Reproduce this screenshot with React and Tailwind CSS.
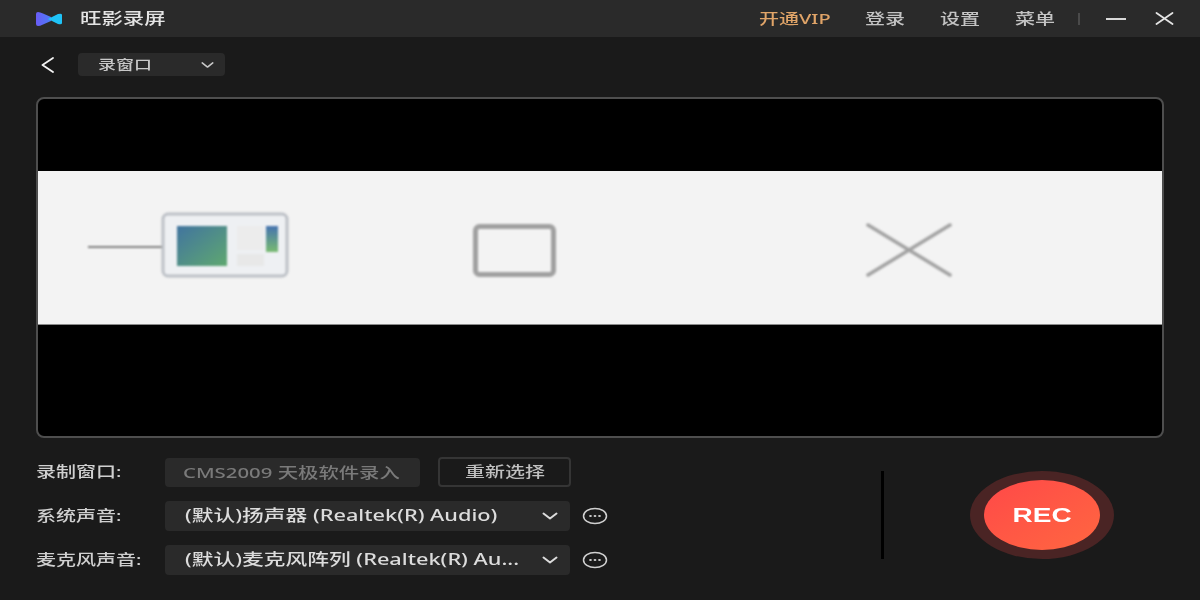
import React from 'react';

// Source picture is stretched sideways, so text is widened with scale-x
const Wide = ({ className = '', children }) => (
  <span className={`block whitespace-nowrap ${className}`}>
    <span className="inline-block origin-left scale-x-[1.38]">{children}</span>
  </span>
);

const Chevron = ({ className = '' }) => (
  <svg className={className} width="16" height="8" viewBox="0 0 16 8" fill="none" stroke="currentColor" strokeWidth="2" strokeLinecap="round" strokeLinejoin="round">
    <path d="M1.5 1.5 L8 6.5 L14.5 1.5" />
  </svg>
);

const MoreIcon = () => (
  <svg width="26" height="18" viewBox="0 0 26 18" fill="none" className="text-[#d0d0d0]">
    <ellipse cx="13" cy="9" rx="11.5" ry="7.5" stroke="currentColor" strokeWidth="1.5" />
    <ellipse cx="8.5" cy="9" rx="1.4" ry="1.1" fill="currentColor" />
    <ellipse cx="13" cy="9" rx="1.4" ry="1.1" fill="currentColor" />
    <ellipse cx="17.5" cy="9" rx="1.4" ry="1.1" fill="currentColor" />
  </svg>
);

const Logo = () => (
  <svg width="28" height="14" viewBox="0 0 28 14">
    <defs>
      <linearGradient id="logoLeft" x1="0" x2="1" y1="0" y2="0">
        <stop offset="0" stopColor="#6a5cf6" />
        <stop offset="1" stopColor="#4c7bf7" />
      </linearGradient>
    </defs>
    <path d="M0 2 Q0 0 2 0 Q4 0 7 1.5 L15 5 L15 9 L7 12.5 Q4 14 2 14 Q0 14 0 12 Z" fill="url(#logoLeft)" />
    <path d="M12 7 L22 2 Q26 1 26 3 L26 11 Q26 13 22 12 Z" fill="#1fc3f7" />
  </svg>
);

const SelectField = ({ text }) => (
  <div className="flex h-[30px] w-[405px] items-center justify-between rounded bg-[#2a2a2a] pl-5 pr-3 text-[#dcdcdc]">
    <Wide className="text-[15.75px] font-medium">{text}</Wide>
    <Chevron />
  </div>
);

const FormLabel = ({ children }) => (
  <Wide className="w-[129px] text-[14.5px] font-medium text-[#d0d0d0]">{children}</Wide>
);

const App = () => {
  return (
    <div className="flex h-[600px] w-[1200px] flex-col overflow-hidden bg-[#1a1a1a] font-['Noto_Sans','Noto_Sans_CJK_SC',sans-serif]">
      {/* Title bar */}
      <div className="flex h-[37px] items-center bg-[#2a2a2a] pl-[36px] pr-[26px]">
        <Logo />
        <Wide className="ml-[16px] text-[15.5px] font-medium text-[#e4e4e4]">旺影录屏</Wide>
        <div className="ml-auto flex items-center text-[14.5px] font-medium text-[#c4c4c4]">
          <Wide className="w-[106px] text-[#e0a468]">开通VIP</Wide>
          <Wide className="w-[75px]">登录</Wide>
          <Wide className="w-[75px]">设置</Wide>
          <Wide className="w-[63px]">菜单</Wide>
          <div className="h-[12px] w-[2px] bg-[#4a4a4a]" />
          <div className="ml-[26px] h-[2px] w-[20px] bg-[#d8d8d8]" />
          <svg className="ml-[29px]" width="19" height="13" viewBox="0 0 19 13" stroke="#e4e4e4" strokeWidth="1.8" strokeLinecap="round">
            <path d="M1.5 1 L17.5 12 M17.5 1 L1.5 12" />
          </svg>
        </div>
      </div>

      {/* Back and mode select */}
      <div className="flex h-[60px] items-start pl-[41px] pt-[16px]">
        <svg className="mt-[4px]" width="13" height="16" viewBox="0 0 13 16" fill="none" stroke="#f4f4f4" strokeWidth="1.8" strokeLinecap="round" strokeLinejoin="round">
          <path d="M12 1 L1.5 8 L12 15" />
        </svg>
        <div className="ml-[24px] flex h-[23px] w-[147px] items-center justify-between rounded bg-[#2a2a2a] pl-5 pr-[11px] text-[#c8c8c8]">
          <Wide className="text-[13px] font-medium">录窗口</Wide>
          <Chevron className="w-[13px]" />
        </div>
      </div>

      {/* Preview */}
      <div className="mx-[36px] h-[341px] overflow-hidden rounded-lg border-2 border-[#4e4e4e] bg-black pt-[72px]">
        <div className="h-[154px] border-b border-[#8a8a8a] bg-[#f3f3f3]">
          <svg width="1126" height="153" viewBox="0 0 1126 153" className="blur-[1px]">
            <defs>
              <linearGradient id="thumbMain" x1="0" x2="1" y1="0" y2="1">
                <stop offset="0" stopColor="#41749f" />
                <stop offset="1" stopColor="#5fa870" />
              </linearGradient>
              <linearGradient id="thumbSide" x1="0" x2="0" y1="0" y2="1">
                <stop offset="0" stopColor="#4573b0" />
                <stop offset="1" stopColor="#78bb70" />
              </linearGradient>
            </defs>
            <path d="M50 76 H126" stroke="#808080" strokeWidth="2" />
            <rect x="125" y="43" width="124" height="62" rx="5" fill="#eef0f3" stroke="#bcc0c6" strokeWidth="3" />
            <rect x="139" y="55" width="50" height="40" fill="url(#thumbMain)" />
            <rect x="199" y="55" width="27" height="24" fill="#ececec" />
            <rect x="199" y="83" width="27" height="12" fill="#e8e8e8" />
            <rect x="228" y="55" width="12" height="26" fill="url(#thumbSide)" />
            <rect x="437.5" y="55.5" width="78" height="48" rx="4" fill="none" stroke="#a0a0a0" strokeWidth="5" />
            <path d="M830 54 L912 104 M912 54 L830 104" stroke="#a2a2a2" strokeWidth="3.5" strokeLinecap="round" />
          </svg>
        </div>
      </div>

      {/* Bottom controls */}
      <div className="flex pl-[36px] pt-[19px]">
        <div className="flex flex-col gap-[14px]">
          <div className="flex h-[30px] items-center">
            <FormLabel>录制窗口:</FormLabel>
            <div className="flex h-[29px] w-[255px] items-center rounded bg-[#2a2a2a] pl-[18px] text-[#7a7a7a]">
              <Wide className="text-[14.75px] font-medium">CMS2009 天极软件录入</Wide>
            </div>
            <div className="ml-[18px] flex h-[30px] w-[133px] items-center justify-center rounded border-2 border-[#353535] text-[#c0c0c0]">
              <Wide className="w-[80px] text-[14.5px] font-medium">重新选择</Wide>
            </div>
          </div>
          <div className="flex items-center">
            <FormLabel>系统声音:</FormLabel>
            <SelectField text="(默认)扬声器 (Realtek(R) Audio)" />
            <div className="ml-[12px]"><MoreIcon /></div>
          </div>
          <div className="flex items-center">
            <FormLabel>麦克风声音:</FormLabel>
            <SelectField text="(默认)麦克风阵列 (Realtek(R) Au..." />
            <div className="ml-[12px]"><MoreIcon /></div>
          </div>
        </div>

        <div className="ml-[273px] mt-[14px] h-[88px] w-[3px] bg-black" />

        {/* Record button */}
        <div className="ml-[86px] mt-[14px] flex h-[88px] w-[144px] items-center justify-center rounded-[50%] bg-[#4a2424]">
          <div className="flex h-[70px] w-[116px] items-center justify-center rounded-[50%] bg-gradient-to-br from-[#ff4848] to-[#ff6640]">
            <span className="inline-block scale-x-[1.4] font-['Liberation_Sans'] text-[20px] font-bold text-white">REC</span>
          </div>
        </div>
      </div>
    </div>
  );
};

export default App;
